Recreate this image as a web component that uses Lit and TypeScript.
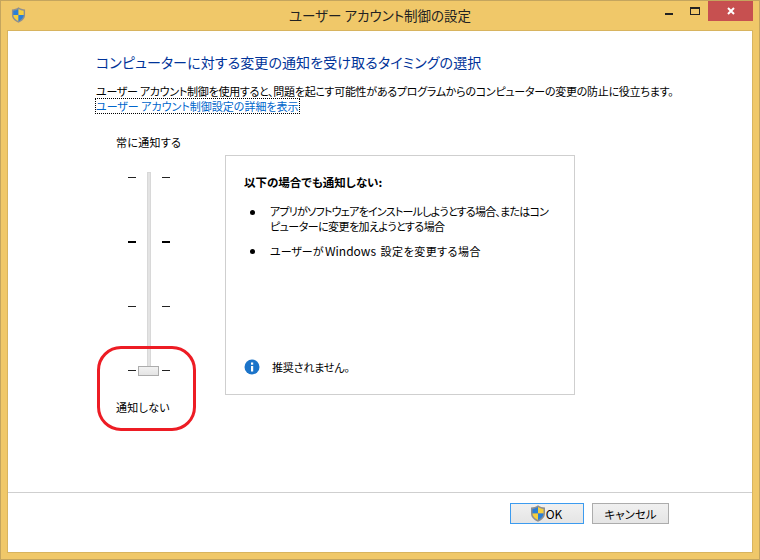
import { LitElement, html, css } from "lit";
import { customElement } from "lit/decorators.js";

const shield = (w: number, h: number) => html`<svg class="shield" width=${w} height=${h} viewBox="0 0 16 17">
  <path d="M8 .2C6 1.800 3.800 2.400 1 2.500V8.500c0 3.800 2.800 6.400 7 8.300 4.200-1.900 7-4.500 7-8.300V2.500C12.200 2.400 10 1.800 8 .2z" fill="#8d8f92"/>
  <path d="M8 2C6.300 3.100 4.500 3.700 2.500 3.900V8.500H8z" fill="#2b7fd6"/>
  <path d="M8 2c1.700 1.100 3.500 1.700 5.500 1.900V8.500H8z" fill="#f6cf3c"/>
  <path d="M2.500 8.500c.1 3 2.300 5 5.500 6.600V8.500z" fill="#f6cf3c"/>
  <path d="M13.500 8.500c-.1 3-2.300 5-5.500 6.600V8.500z" fill="#2b7fd6"/>
</svg>`;

@customElement("app-root")
export class AppRoot extends LitElement {
  static styles = css`
    :host { display: block; width: 760px; height: 560px; }
    * { box-sizing: border-box; }
    .window {
      position: relative; width: 760px; height: 560px; display: flex; flex-direction: column;
      background: #f0c869; border: 1px solid #c4a55e; color: #000;
      font-family: "Noto Sans CJK JP", "Noto Sans", sans-serif; font-size: 11px;
      font-feature-settings: "palt"; overflow: hidden;
    }
    .titlebar { height: 29px; display: flex; align-items: flex-start; flex: none; position: relative; }
    .appicon { margin: 6px 0 0 10px; display: flex; }
    .title { position: absolute; left: 0; right: 0; top: 4px; text-align: center; font-size: 13.5px; line-height: 20px; color: #222; }
    .controls { margin-left: auto; margin-right: 6px; display: flex; position: relative; }
    .ctl { width: 26px; height: 20px; display: flex; align-items: center; justify-content: center; }
    .ctl.min svg { margin-top: 6px; }
    .close { width: 45px; background: #c75050; }
    .client { flex: 1; margin: 0 6px 6px 6px; background: #fff; border: 1px solid #d8b45f; display: flex; flex-direction: column; min-height: 0; }
    .content { flex: 1; padding: 21px 0 0 88px; min-height: 0; }
    h1 { margin: 0; font-weight: 400; font-size: 14px; letter-spacing: 0.1px; line-height: 20px; color: #003399; }
    .intro { margin: 12px 0 0; line-height: 15px; }
    .introtext { letter-spacing: -0.27px; }
    .link { display: inline-block; color: #0066cc; line-height: 14px; outline: 1px dotted #000; }
    .main { display: flex; margin-top: 20px; }
    .slider { width: 130px; display: flex; flex-direction: column; }
    .lab { padding-left: 20px; line-height: 16px; letter-spacing: 0.3px; }
    .scale { width: 106px; height: 204px; margin-top: 22px; position: relative; display: flex; flex-direction: column; justify-content: space-between; padding: 5px 0; }
    .track { position: absolute; left: 51px; top: 0; bottom: 0; width: 4px; background: #e3e3e3; border: 1px solid #d8d8d8; }
    .row { display: flex; justify-content: center; gap: 26px; height: 1px; }
    .tick { width: 8px; height: 1px; background: #222; }
    .row.bold { height: 2px; }
    .row.bold .tick { height: 2px; background: #000; }
    .thumb { position: absolute; left: 42px; bottom: 0; width: 21px; height: 10px; background: linear-gradient(#f2f2f2, #e4e4e4); border: 1px solid #acacac; }
    .bottomlab { margin-top: 23px; }
    .panel { width: 350px; height: 240px; margin: 21px 0 0 -1px; border: 1px solid #cfcfcf; padding: 18px; display: flex; flex-direction: column; }
    .panel h2 { margin: 0; font-size: 11.5px; font-weight: 700; line-height: 16px; }
    ul { list-style: none; margin: 14px 0 0; padding: 0; }
    li { display: flex; line-height: 15px; margin-bottom: 9px; }
    .tight { letter-spacing: -0.55px; white-space: nowrap; }
    .tighter { letter-spacing: -0.75px; }
    .win { font-size: 12px; margin: 0 2px 0 -1px; }
    .wide { letter-spacing: 0.5px; }
    .bullet { width: 26px; flex: none; padding-left: 6px; padding-top: 6px; }
    .bullet i { display: block; width: 5px; height: 5px; background: #000; border-radius: 50%; }
    .note { margin-top: auto; margin-bottom: 1px; display: flex; align-items: center; gap: 12px; line-height: 16px; letter-spacing: -0.15px; }
    .note svg { display: block; }
    .footer { flex: none; height: 60px; border-top: 1px solid #cfcfcf; display: flex; justify-content: flex-end; align-items: flex-start; padding: 10px 83px 0 0; gap: 8px; }
    button { font: inherit; font-size: 11.5px; color: #000; height: 21px; padding: 0; display: flex; align-items: center; justify-content: center; background: linear-gradient(#f0f0f0, #e5e5e5); border: 1px solid #acacac; font-feature-settings: "palt"; }
    .ok { width: 74px; border-color: #3c9bef; font-size: 12px; padding-right: 2px; }
    .cancel { width: 77px; }
    .shield { display: block; }
    .ring { position: absolute; left: 96px; top: 345px; width: 99px; height: 85px; border: 3px solid #ed1c24; border-radius: 24px; }
  `;

  render() {
    return html`<div class="window">
      <div class="titlebar">
        <div class="appicon">${shield(15, 16)}</div>
        <div class="title">ユーザー アカウント制御の設定</div>
        <div class="controls">
          <div class="ctl min"><svg width="8" height="2"><rect width="8" height="2" fill="#222"/></svg></div>
          <div class="ctl"><svg width="10" height="8"><rect x=".5" y=".5" width="9" height="7" fill="none" stroke="#222"/><rect width="10" height="2" fill="#222"/></svg></div>
          <div class="ctl close"><svg width="8" height="8" viewBox="0 0 8 8"><path d="M1 1l6 6M7 1L1 7" stroke="#fff" stroke-width="2"/></svg></div>
        </div>
      </div>
      <div class="client">
        <div class="content">
          <h1>コンピューターに対する変更の通知を受け取るタイミングの選択</h1>
          <p class="intro"><span class="introtext">ユーザー アカウント制御を使用すると、問題を起こす可能性があるプログラムからのコンピューターの変更の防止に役立ちます。</span><br><a class="link">ユーザー アカウント制御設定の詳細を表示</a></p>
          <div class="main">
            <div class="slider">
              <div class="lab">常に通知する</div>
              <div class="scale">
                <div class="track"></div>
                <div class="row"><span class="tick"></span><span class="tick"></span></div>
                <div class="row bold"><span class="tick"></span><span class="tick"></span></div>
                <div class="row"><span class="tick"></span><span class="tick"></span></div>
                <div class="row"><span class="tick"></span><span class="tick"></span></div>
                <div class="thumb"></div>
              </div>
              <div class="lab bottomlab">通知しない</div>
            </div>
            <div class="panel">
              <h2>以下の場合でも通知しない:</h2>
              <ul>
                <li><span class="bullet"><i></i></span><span class="tight"><span class="tighter">アプリがソフトウェアをインストールしようとする場合、またはコン</span><br>ピューターに変更を加えようとする場合</span></li>
                <li><span class="bullet"><i></i></span><span>ユーザーが <span class="win">Windows</span> <span class="wide">設定を変更する場合</span></span></li>
              </ul>
              <div class="note">
                <svg width="16" height="16" viewBox="0 0 16 16"><circle cx="8" cy="8" r="7.500" fill="#1c74c9"/><rect x="7" y="7" width="2.200" height="5.500" fill="#fff"/><rect x="7" y="3.500" width="2.200" height="2.200" fill="#fff"/></svg>
                <span>推奨されません。</span>
              </div>
            </div>
          </div>
        </div>
        <div class="footer">
          <button class="ok">${shield(16, 17)}OK</button>
          <button class="cancel">キャンセル</button>
        </div>
      </div>
      <div class="ring"></div>
    </div>`;
  }
}
